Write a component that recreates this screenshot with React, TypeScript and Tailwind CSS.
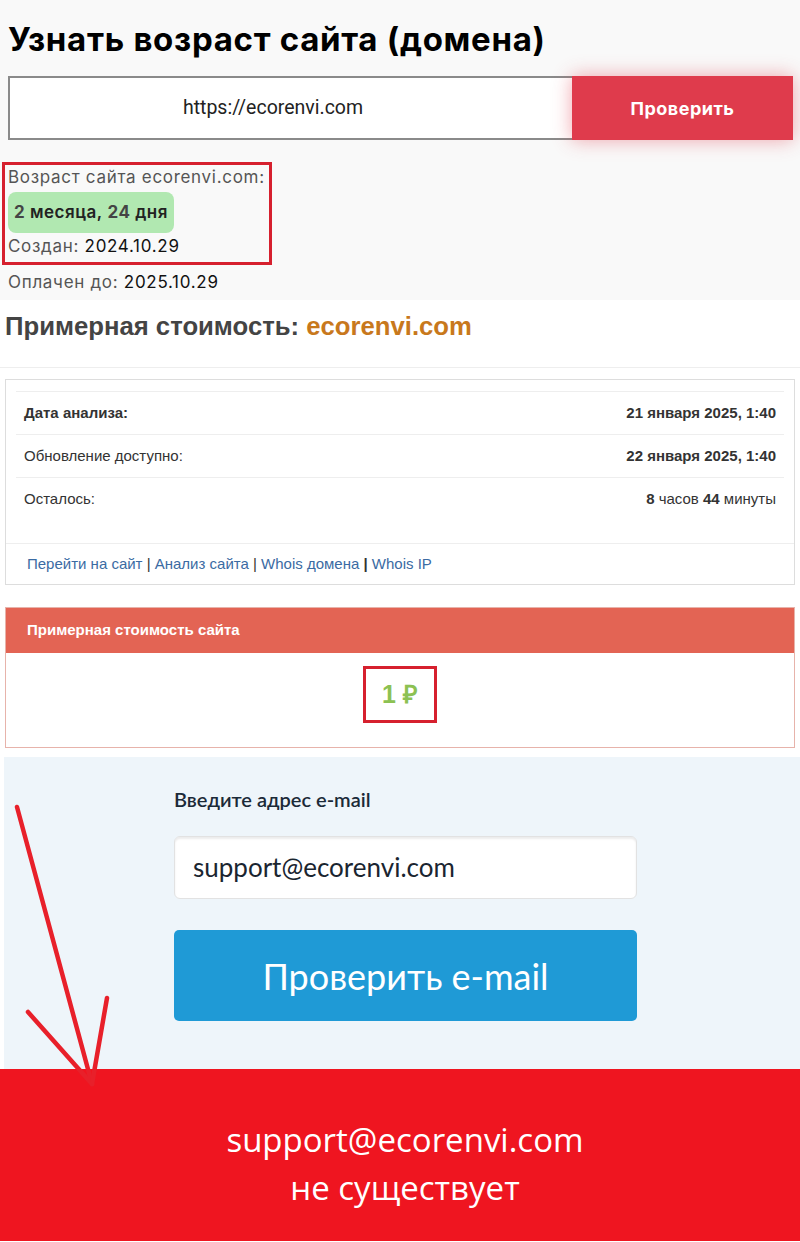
export default function App() {
  return (
    <div className="relative w-[800px] h-[1242px] overflow-hidden bg-white">
      {/* домен: возраст */}
      <section className="h-[300px] bg-[#f9f9f9] px-2 pt-[19px] font-['Inter',sans-serif]">
        <h1 className="text-[33px] font-bold leading-[40px] text-black tracking-[0.7px]">
          Узнать возраст сайта (домена)
        </h1>
        <div className="mt-[17px] flex h-[64px] w-[785px]">
          <div className="flex flex-1 items-center justify-center border-2 border-r-0 border-[#8a8a8a] bg-white pr-[36px] font-['Roboto',sans-serif] text-[19.5px] text-[#222]">
            https://ecorenvi.com
          </div>
          <button className="w-[221px] bg-[#df3b4c] text-[18px] font-bold tracking-[0.5px] text-white shadow-[0_0_18px_rgba(223,59,76,0.45)]">
            Проверить
          </button>
        </div>
        <div className="-ml-[6px] mt-[22px] w-[270px] border-[3px] border-[#d6202e] pl-[3px] pb-[4px] tracking-[0.7px]">
          <div className="text-[17px] leading-[24px] text-[#555]">Возраст сайта ecorenvi.com:</div>
          <div className="mt-[3px] inline-flex h-[41px] items-center rounded-[8px] bg-[#b1e8b1] px-[6px] text-[17px] font-semibold tracking-[0.5px] text-[#222]">
            <span className="font-bold text-[#444]">2</span>&nbsp;месяца,&nbsp;
            <span className="font-bold text-[#444]">24</span>&nbsp;дня
          </div>
          <div className="mt-[1px] text-[17px] leading-[24px] text-[#555]">
            Создан: <span className="text-[#111]">2024.10.29</span>
          </div>
        </div>
        <div className="mt-[5px] text-[17px] leading-[24px] tracking-[0.7px] text-[#555]">
          Оплачен до: <span className="text-[#111]">2025.10.29</span>
        </div>
      </section>

      {/* примерная стоимость */}
      <section className="font-['Liberation_Sans',Arial,sans-serif]">
        <h2 className="h-[68px] border-b border-[#eee] pl-[5px] pt-[11px] text-[25.7px] font-bold leading-[30px] text-[#444]">
          Примерная стоимость: <span className="text-[#c8781c]">ecorenvi.com</span>
        </h2>
        <div className="mx-[5px] mt-[11px] h-[206px] border border-[#ddd]">
          <div className="px-[10px] pt-[11px]">
            {[
              ["Дата анализа:", "21 января 2025, 1:40", true],
              ["Обновление доступно:", "22 января 2025, 1:40", false],
            ].map(([label, value, bold]) => (
              <div
                key={label as string}
                className="flex h-[43px] items-center justify-between border-t border-[#eee] px-[8px] text-[15px] text-[#333]"
              >
                <span className={bold ? "font-bold" : ""}>{label}</span>
                <span className="font-bold">{value}</span>
              </div>
            ))}
            <div className="flex h-[43px] items-center justify-between border-t border-[#eee] px-[8px] text-[15px] text-[#333]">
              <span>Осталось:</span>
              <span>
                <b>8</b> часов <b>44</b> минуты
              </span>
            </div>
          </div>
          <div className="mt-[23px] flex h-[41px] items-center border-t border-[#eee] pl-[21px] text-[15px] text-[#333]">
            <span className="text-[#3b6ba3]">Перейти на сайт</span>&nbsp;|&nbsp;
            <span className="text-[#3b6ba3]">Анализ сайта</span>&nbsp;|&nbsp;
            <span className="text-[#3b6ba3]">Whois домена</span>&nbsp;<b>|</b>&nbsp;
            <span className="text-[#3b6ba3]">Whois IP</span>
          </div>
        </div>

        <div className="mx-[5px] mt-[22px] h-[141px] border border-[#e7b3ab]">
          <div className="flex h-[45px] items-center bg-[#e36454] pl-[21px] text-[15px] font-bold text-white">
            Примерная стоимость сайта
          </div>
          <div className="flex justify-center pt-[13px]">
            <div className="flex h-[57px] w-[74px] items-center justify-center border-[3px] border-[#d6202e] text-[25px] font-bold text-[#8cc152]">
              1&nbsp;₽
            </div>
          </div>
        </div>
      </section>

      {/* проверка e-mail */}
      <section className="ml-[4px] mt-[9px] h-[312px] bg-[#eef5fa] pl-[170px] pt-[29px] font-['Lato',sans-serif]">
        <div className="text-[20px] font-semibold leading-[26px] text-[#1b2a38]">Введите адрес e-mail</div>
        <div className="mt-[24px] flex h-[63px] w-[463px] items-center rounded-[6px] border border-[#e2e2e2] bg-white pl-[18px] text-[26px] text-[#1a2530] shadow-[inset_0_2px_2px_rgba(0,0,0,0.08)]">
          support@ecorenvi.com
        </div>
        <button className="mt-[31px] flex h-[91px] w-[463px] items-center justify-center rounded-[5px] bg-[#1f9ad6] text-[36px] text-white">
          Проверить e-mail
        </button>
      </section>

      <section className="flex h-[172px] flex-col items-center bg-[#ef1520] pl-[10px] pt-[47px] font-['Open_Sans',sans-serif] text-[33px] leading-[48px] text-white">
        <div>support@ecorenvi.com</div>
        <div>не существует</div>
      </section>

      {/* стрелка-пометка */}
      <svg className="pointer-events-none absolute left-0 top-0" width="800" height="1242" viewBox="0 0 800 1242">
        <g stroke="#e8202a" strokeWidth="4.5" strokeLinecap="round" fill="none">
          <line x1="17" y1="807" x2="92" y2="1084" />
          <line x1="28" y1="1012" x2="92" y2="1084" />
          <line x1="107" y1="998" x2="92" y2="1084" />
        </g>
      </svg>
    </div>
  );
}
